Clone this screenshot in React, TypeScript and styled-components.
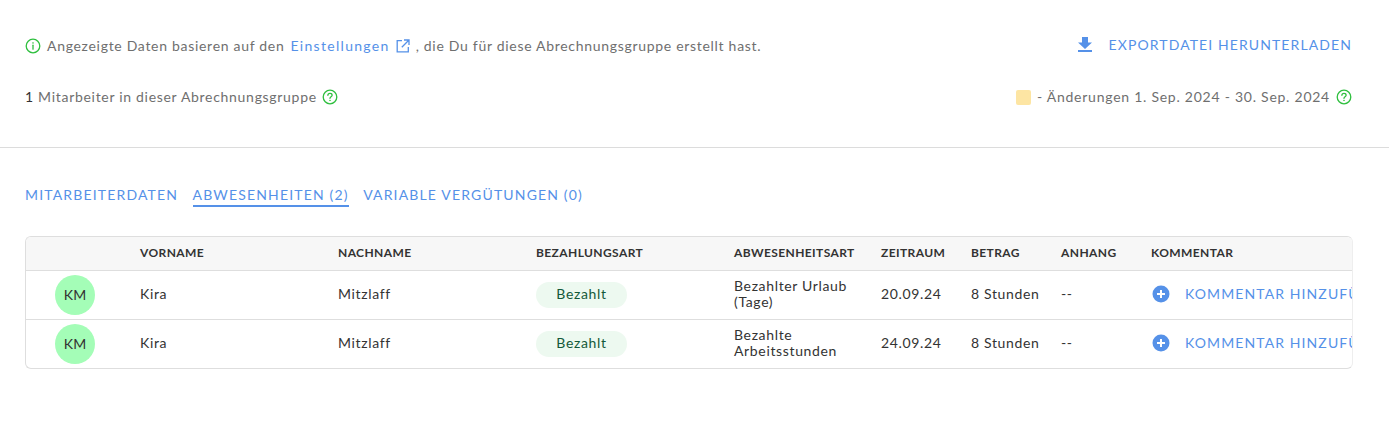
import styled, { createGlobalStyle } from "styled-components";

const rows = [
  { type: "Bezahlter Urlaub (Tage)", period: "20.09.24" },
  { type: "Bezahlte Arbeitsstunden", period: "24.09.24" },
];

const headers = ["", "VORNAME", "NACHNAME", "BEZAHLUNGSART", "ABWESENHEITSART", "ZEITRAUM", "BETRAG", "ANHANG", "KOMMENTAR"];

function InfoIcon() {
  return (
    <svg width="16" height="16" viewBox="0 0 16 16" fill="none" stroke="#2fbf3f" strokeWidth="1.3">
      <circle cx="8" cy="8" r="6.8" />
      <path d="M8 7.2v4" strokeLinecap="round" />
      <circle cx="8" cy="4.9" r="0.5" fill="#2fbf3f" strokeWidth="0.5" />
    </svg>
  );
}

function HelpIcon() {
  return (
    <svg width="16" height="16" viewBox="0 0 16 16" fill="none" stroke="#2fbf3f" strokeWidth="1.3">
      <circle cx="8" cy="8" r="6.8" />
      <path d="M5.9 6.3c0-1.2 1-1.9 2.1-1.9s2.1.7 2.1 1.8c0 1.6-2.1 1.5-2.1 3.1" strokeLinecap="round" />
      <circle cx="8" cy="11.4" r="0.5" fill="#2fbf3f" strokeWidth="0.5" />
    </svg>
  );
}

function ExternalIcon() {
  return (
    <svg width="14" height="14" viewBox="0 0 14 14" fill="none" stroke="#5591e8" strokeWidth="1.3">
      <path d="M6 1.7H1.2v11.1h11.1V8" />
      <path d="M8 1H13v5M13 1 5.8 8.2" />
    </svg>
  );
}

function DownloadIcon() {
  return (
    <svg width="14" height="15" viewBox="0 0 14 15" fill="#5591e8">
      <path d="M4 0h6v5.5h4L7 12 0 5.500h4z" />
      <rect x="0" y="13" width="14" height="2" />
    </svg>
  );
}

function PlusIcon() {
  return (
    <svg width="18" height="18" viewBox="0 0 18 18">
      <circle cx="9" cy="9" r="8.500" fill="#5591e8" />
      <path d="M9 5v8M5 9h8" stroke="#fff" strokeWidth="2" />
    </svg>
  );
}

export default function App() {
  return (
    <>
      <GlobalStyle />
      <Summary>
        <SummaryRow>
          <Note>
            <InfoIcon />
            <NoteText>Angezeigte Daten basieren auf den</NoteText>
            <SettingsLink>Einstellungen</SettingsLink>
            <ExternalIcon />
            <NoteText>, die Du für diese Abrechnungsgruppe erstellt hast.</NoteText>
          </Note>
          <ExportButton>
            <DownloadIcon />
            EXPORTDATEI HERUNTERLADEN
          </ExportButton>
        </SummaryRow>
        <SummaryRow>
          <MemberNote>
            <NoteText>
              <Count>1</Count> Mitarbeiter in dieser Abrechnungsgruppe
            </NoteText>
            <HelpIcon />
          </MemberNote>
          <DateNote>
            <Swatch />
            <NoteText>- Änderungen 1. Sep. 2024 - 30. Sep. 2024</NoteText>
            <HelpIcon />
          </DateNote>
        </SummaryRow>
      </Summary>
      <Tabs>
        <Tab>MITARBEITERDATEN</Tab>
        <Tab $active>ABWESENHEITEN (2)</Tab>
        <Tab>VARIABLE VERGÜTUNGEN (0)</Tab>
      </Tabs>
      <TableCard>
        <HeaderRow>
          {headers.map((h) => (
            <HeaderCell key={h}>{h}</HeaderCell>
          ))}
        </HeaderRow>
        {rows.map((r) => (
          <BodyRow key={r.period}>
            <AvatarCell>
              <Avatar>KM</Avatar>
            </AvatarCell>
            <Cell>Kira</Cell>
            <Cell>Mitzlaff</Cell>
            <Cell>
              <PaidBadge>Bezahlt</PaidBadge>
            </Cell>
            <WrapCell>{r.type}</WrapCell>
            <Cell>{r.period}</Cell>
            <Cell>8 Stunden</Cell>
            <Cell>--</Cell>
            <Cell>
              <CommentButton>
                <PlusIcon />
                KOMMENTAR HINZUFÜGEN
              </CommentButton>
            </Cell>
          </BodyRow>
        ))}
      </TableCard>
    </>
  );
}

const GlobalStyle = createGlobalStyle`
  body {
    margin: 0;
    background: #fff;
    font-family: "Lato", "Noto Sans", sans-serif;
    overflow: hidden;
  }
`;

const Summary = styled.section`
  display: flex;
  flex-direction: column;
  gap: 19px;
  height: 148px;
  box-sizing: border-box;
  padding: 30px 37px 0 25px;
  border-bottom: 1px solid #dcdcdc;
`;

const SummaryRow = styled.div`
  display: flex;
  align-items: center;
  justify-content: space-between;
  height: 32px;
`;

const Note = styled.div`
  display: flex;
  align-items: center;
  gap: 6px;
  font-size: 14px;
  letter-spacing: 0.7px;
  color: #6f6f6f;
`;

const MemberNote = styled(Note)`
  gap: 5px;
`;

const DateNote = styled(Note)`
  letter-spacing: 0.75px;
`;

const NoteText = styled.span`
  padding-bottom: 2px;
`;

const SettingsLink = styled(NoteText)`
  color: #5591e8;
  letter-spacing: 1.3px;
`;

const Count = styled.span`
  color: #333;
`;

const Swatch = styled.span`
  width: 15px;
  height: 15px;
  border-radius: 2px;
  background: #fde5a3;
`;

const ExportButton = styled.div`
  display: flex;
  align-items: center;
  gap: 17px;
  padding-bottom: 3px;
  font-size: 14px;
  letter-spacing: 1.1px;
  color: #5591e8;
`;

const Tabs = styled.nav`
  display: flex;
  gap: 14.5px;
  padding: 37px 25px 0;
`;

const Tab = styled.div<{ $active?: boolean }>`
  height: 20px;
  line-height: 20px;
  font-size: 14px;
  letter-spacing: 1.16px;
  color: #5591e8;
  border-bottom: 2px solid ${({ $active }) => ($active ? "#5591e8" : "transparent")};
`;

const TableCard = styled.div`
  margin: 29px 36px 0 25px;
  border: 1px solid #dedede;
  border-right-color: #eee;
  border-radius: 6px;
  overflow: hidden;
`;

const columns = "114px 198px 198px 198px 147px 90px 90px 90px 1fr";

const HeaderRow = styled.div`
  display: grid;
  grid-template-columns: ${columns};
  align-items: center;
  height: 33px;
  background: #f7f7f7;
`;

const HeaderCell = styled.div`
  padding-bottom: 2px;
  font-size: 12px;
  font-weight: 700;
  letter-spacing: 0.4px;
  color: #333;
  white-space: nowrap;
`;

const BodyRow = styled.div`
  display: grid;
  grid-template-columns: ${columns};
  align-items: center;
  height: 48px;
  border-top: 1px solid #dedede;
`;

const Cell = styled.div`
  font-size: 14px;
  letter-spacing: 0.65px;
  line-height: 16px;
  color: #333;
  white-space: nowrap;
  padding-bottom: 2px;
`;

const WrapCell = styled(Cell)`
  white-space: normal;
  width: 125px;
`;

const AvatarCell = styled.div`
  padding-left: 29px;
`;

const Avatar = styled.div`
  display: flex;
  align-items: center;
  justify-content: center;
  box-sizing: border-box;
  width: 40px;
  height: 40px;
  padding-bottom: 2px;
  border-radius: 50%;
  background: #a4fdb7;
  font-size: 14px;
  color: #333;
`;

const PaidBadge = styled.span`
  display: inline-flex;
  align-items: center;
  justify-content: center;
  box-sizing: border-box;
  width: 91px;
  height: 26px;
  margin-top: 2px;
  padding-bottom: 2px;
  border-radius: 13px;
  background: #edf9f0;
  color: #14593a;
`;

const CommentButton = styled.div`
  display: flex;
  align-items: center;
  gap: 15px;
  padding-left: 1px;
  font-size: 14px;
  letter-spacing: 1.1px;
  color: #5591e8;
`;
